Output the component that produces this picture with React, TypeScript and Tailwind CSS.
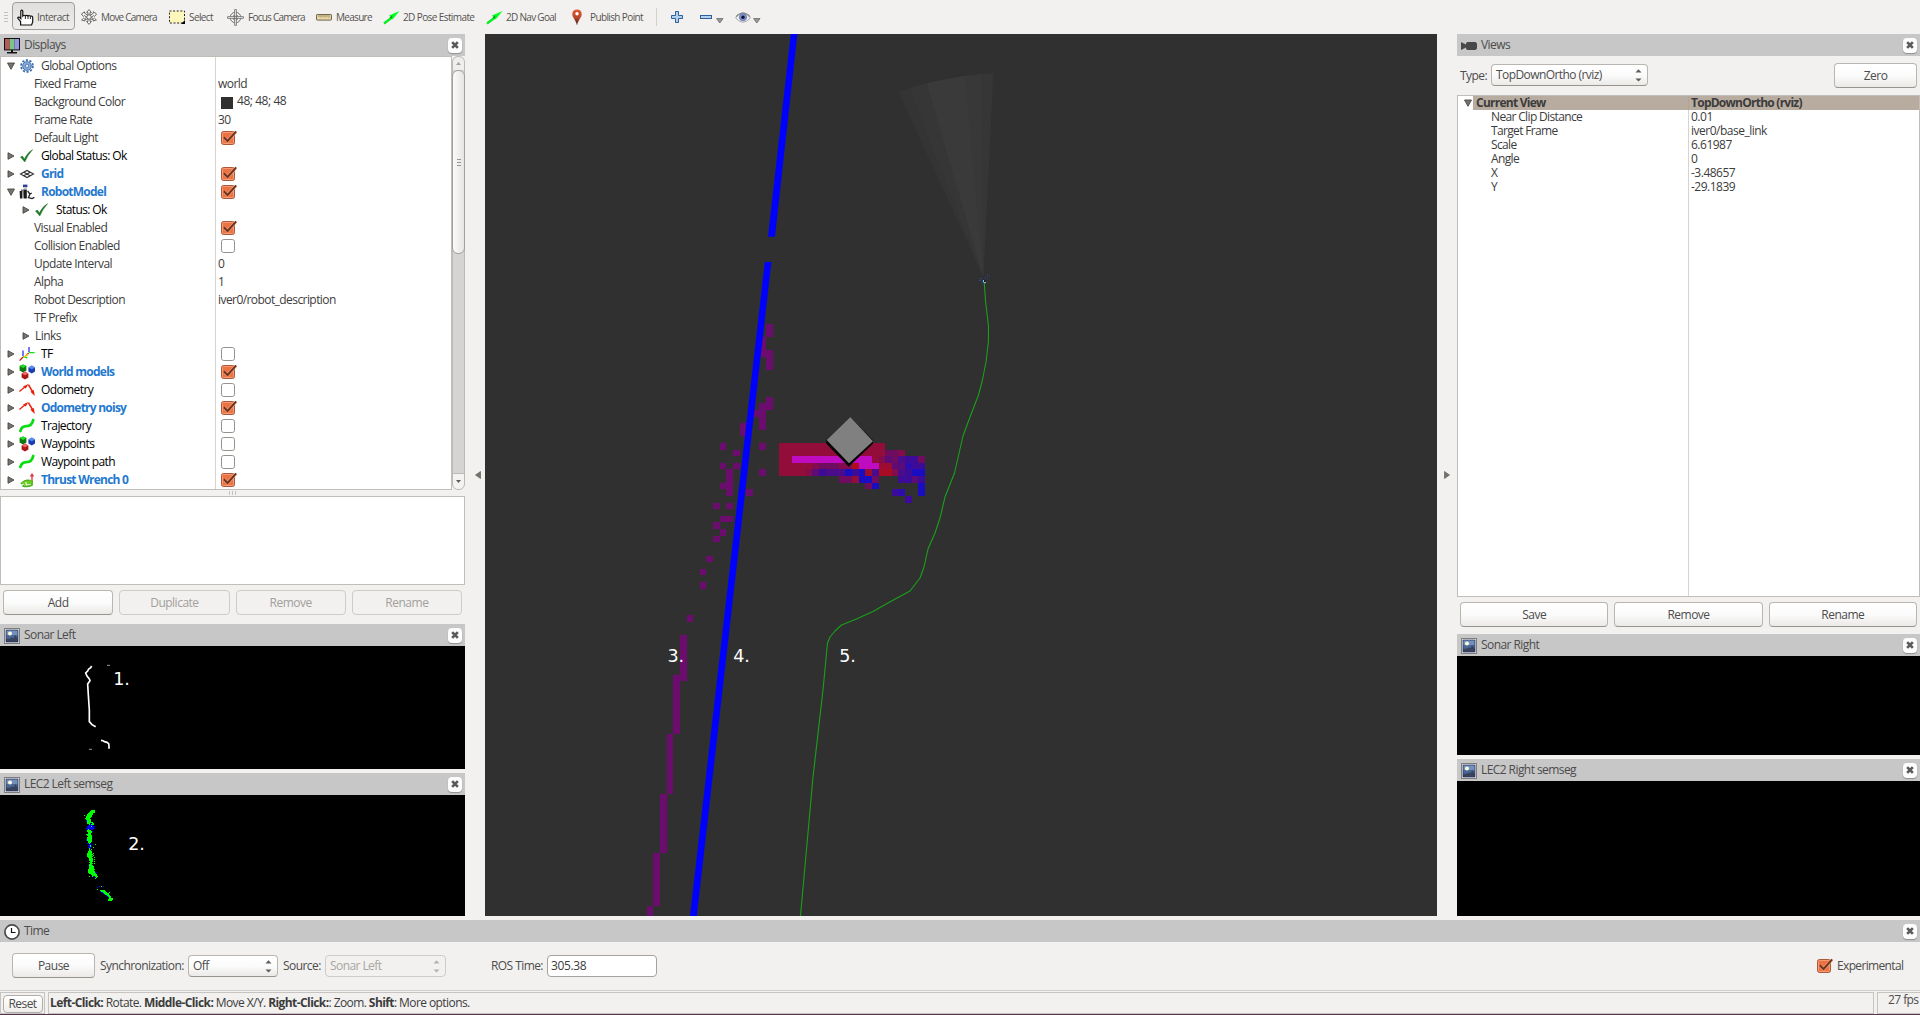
import React from "react";
import type { ReactNode } from "react";

/* ---------- small building blocks ---------- */

function Check({ on }: { on: boolean }) {
  return (
    <svg width="16" height="16" viewBox="0 0 16 16">
      {on ? (
        <>
          <rect x="0.5" y="1.5" width="13" height="13" rx="2" fill="#ec7242" stroke="#a9583a" />
          <rect x="1.5" y="2.5" width="11" height="11" rx="1" fill="none" stroke="#f59a74" />
          <path d="M3 7.6 L6.6 11 L15 1.8" fill="none" stroke="#fbb795" strokeWidth="3.4" opacity=".6" />
          <path d="M2.8 7.2 L6.6 11 L15.2 1.4" fill="none" stroke="#6e3420" strokeWidth="2" />
        </>
      ) : (
        <rect x="0.5" y="1.5" width="13" height="13" rx="2.2" fill="#fff" stroke="#96928c" />
      )}
    </svg>
  );
}

function Arrow({ open }: { open?: boolean }) {
  return (
    <svg width="8" height="8" viewBox="0 0 8 8">
      <path
        d={open ? "M0.5 1 H7.5 L4 7.3 Z" : "M1 0.7 V7.3 L7 4 Z"}
        fill="#77736f"
        stroke="#4a4744"
        strokeWidth="0.9"
      />
    </svg>
  );
}

function CloseButton() {
  return (
    <span className="flex h-[15px] w-[14px] items-center justify-center rounded-[4px] bg-[#fdfdfd] shadow-[0_1px_1px_#8f8f8f]">
      <svg width="8" height="8" viewBox="0 0 9 9">
        <path d="M1.3 1.3 L7.7 7.7 M7.7 1.3 L1.3 7.7" stroke="#5a5a5a" strokeWidth="3" />
      </svg>
    </span>
  );
}

const pictureIcon = (
  <svg width="16" height="16" viewBox="0 0 16 16">
    <rect x="0.5" y="0.5" width="15" height="15" fill="#fff" stroke="#7d7d7d" />
    <rect x="2" y="2" width="12" height="12" fill="#4b6896" />
    <rect x="2" y="2" width="12" height="5" fill="#7390bd" />
    <circle cx="6" cy="5.4" r="2" fill="#fbfbe0" />
    <path d="M2 11 L6 10.5 L8 9.5 L10 10 L11 7 L12.5 9 L14 11 V14 H2 Z" fill="#39435e" />
    <rect x="2" y="2" width="12" height="12" fill="none" stroke="#28365c" strokeWidth="0.8" />
  </svg>
);

const monitorIcon = (
  <svg width="16" height="16" viewBox="0 0 16 16">
    <rect width="16" height="12.4" fill="#111" />
    <rect x="1" y="1" width="4.8" height="10.4" fill="#b35a5a" />
    <rect x="5.8" y="1" width="4.6" height="10.4" fill="#7cc482" />
    <rect x="10.4" y="1" width="4.6" height="10.4" fill="#9594de" />
    <path d="M7 12 H9 V14 H13 V15.4 H3 V14 H7 Z" fill="#151515" />
  </svg>
);

const cameraIcon = (
  <svg width="16" height="16" viewBox="0 0 16 16">
    <path d="M0 4 V12 L5 9.4 V11 L6.5 12 H14.5 L16 10.5 V5.5 L14.5 4 H6.5 L5 5 V6.6 Z" fill="#484848" />
  </svg>
);

const clockIcon = (
  <svg width="16" height="16" viewBox="0 0 16 16">
    <circle cx="8" cy="8" r="7.1" fill="#fff" stroke="#4a4a4a" strokeWidth="1.7" />
    <path d="M7.5 4 V8.5 H11.5" fill="none" stroke="#111" strokeWidth="1.2" />
  </svg>
);

function PanelHeader({ icon, title }: { icon: ReactNode; title: string }) {
  return (
    <div className="flex h-[22px] shrink-0 items-center bg-[#c7c7c7] pr-[3px] pl-1">
      <span className="mt-px">{icon}</span>
      <span className="ml-1 flex-1 text-[#4c4c4c]">{title}</span>
      <CloseButton />
    </div>
  );
}

function Button({ label, cls, disabled }: { label: string; cls: string; disabled?: boolean }) {
  return (
    <button
      className={
        "flex h-[25px] items-center justify-center rounded-[4px] border text-[12px] tracking-[-0.5px] " +
        (disabled
          ? "border-[#cfccc8] bg-[#f2f1ef] text-[#a2a09d] "
          : "border-[#b9b6b1] border-b-[#98958f] bg-linear-to-b from-white via-[#fbfbfb] to-[#ebeae8] text-[#4c4c4c] ") +
        cls
      }
    >
      {label}
    </button>
  );
}

function Combo({ label, cls, disabled }: { label: string; cls: string; disabled?: boolean }) {
  return (
    <div
      className={
        "flex h-[22px] items-center justify-between rounded-[4px] border pr-[5px] pl-1 " +
        (disabled
          ? "border-[#cfccc8] bg-[#f2f1ef] text-[#a8a6a3] "
          : "border-[#b9b6b1] border-b-[#98958f] bg-linear-to-b from-white via-[#fbfbfb] to-[#ebeae8] text-[#4c4c4c] ") +
        cls
      }
    >
      <span>{label}</span>
      <svg width="7" height="14" viewBox="0 0 7 14" fill={disabled ? "#b4b2af" : "#5c5c5c"}>
        <path d="M0.5 4.5 H6.5 L3.5 1.3 Z M0.5 10.5 H6.5 L3.5 13.5 Z" />
      </svg>
    </div>
  );
}

/* ---------- toolbar ---------- */

const greenArrow = (
  <svg width="17" height="15" viewBox="0 0 17 15">
    <path d="M1 13.5 L9 7.5" stroke="#00f01e" strokeWidth="2.2" />
    <path d="M6 5.6 L16.5 1 L9.6 9.4 Z" fill="#00ff22" />
    <path d="M6.5 7.6 L9.6 5.4 L8.6 8.6 Z" fill="#0a8f1a" />
  </svg>
);

function ToolLabel({ children, cls }: { children: ReactNode; cls: string }) {
  return <span className={"shrink-0 whitespace-nowrap text-[10px] text-[#56534f] " + cls}>{children}</span>;
}

function Toolbar() {
  return (
    <div className="flex h-[34px] shrink-0 items-center">
      <div className="ml-1 flex h-2.5 w-1 flex-col justify-between">
        <i className="h-px bg-[#c4c2be]" />
        <i className="h-px bg-[#c4c2be]" />
        <i className="h-px bg-[#c4c2be]" />
        <i className="h-px bg-[#c4c2be]" />
      </div>
      <div className="-mt-0.5 ml-1 flex h-[28px] w-[63px] items-center rounded-[4px] border border-[#a19e99] bg-linear-to-b from-[#e0dfdd] to-[#eeedeb]">
        <svg className="mt-0.5 ml-1" width="17" height="17" viewBox="0 0 17 17">
          <path
            d="M3.6 16 V12.5 L0.8 9.3 Q0.6 7.6 2.4 8.2 L3.8 9.5 V2 Q4.7 0.3 5.8 2 V7 Q7 5.6 8.4 6.9 Q9.8 5.7 11 7 Q12.2 6 13.4 7.2 Q15.6 6.6 15.7 8.4 V13 L14.6 16 Z"
            fill="#fff"
            stroke="#111"
            strokeWidth="1.2"
          />
          <path d="M8.4 7 V10 M11 7.2 V10 M13.4 7.5 V10" stroke="#111" strokeWidth="0.9" />
        </svg>
        <ToolLabel cls="mt-0.5 ml-[3px] tracking-[-0.5px]">Interact</ToolLabel>
      </div>
      <svg className="ml-[6px] shrink-0" width="16" height="16" viewBox="0 0 16 16" fill="#f6f6f5" stroke="#5b5b5b" strokeWidth="0.9">
        <path d="M8 0.6 L10.4 3.4 H9 V6.4 L12.4 4.2 V2.8 L15.6 5 L13.6 7.4 L12.6 6.6 L10.4 8.2 L12.4 10 L13.4 9.2 L15.4 11 L12.2 12 V10.8 L9 9.6 V12.4 H10.4 L8 15.4 L5.6 12.4 H7 V9.6 L3.8 10.8 V12 L0.6 11 L2.6 9.2 L3.6 10 L5.6 8.2 L3.4 6.6 L2.4 7.4 L0.4 5 L3.6 2.8 V4.2 L7 6.4 V3.4 H5.6 Z" />
        <circle cx="8" cy="8" r="2.2" />
      </svg>
      <ToolLabel cls="ml-1 w-[55px] tracking-[-0.8px]">Move Camera</ToolLabel>
      <svg className="ml-[13px] shrink-0" width="16" height="14" viewBox="0 0 16 14">
        <rect x="0.5" y="1" width="15" height="12" fill="#fdf6bd" stroke="#26231c" strokeDasharray="2 1.6" />
        <path d="M12 14 H16 V10 Z" fill="#000" />
      </svg>
      <ToolLabel cls="ml-1 w-[25px] tracking-[-0.6px]">Select</ToolLabel>
      <svg className="ml-[13px] shrink-0" width="17" height="17" viewBox="0 0 17 17" fill="none" stroke="#6a6a6a">
        <circle cx="8.5" cy="8.5" r="5.3" />
        <circle cx="8.5" cy="8.5" r="2.6" />
        <path d="M7.6 0.6 H9.4 V16.4 H7.6 Z M0.6 7.6 H16.4 V9.4 H0.6 Z" fill="#eee" strokeWidth="0.8" />
      </svg>
      <ToolLabel cls="ml-1 w-[56px] tracking-[-0.75px]">Focus Camera</ToolLabel>
      <svg className="ml-3 shrink-0" width="16" height="7" viewBox="0 0 16 7">
        <rect x="0.5" y="0.5" width="15" height="5.6" rx="0.6" fill="#e8d6a4" stroke="#6f6753" />
        <path d="M3 1 V3 M5 1 V3.6 M7 1 V3 M9 1 V3.6 M11 1 V3 M13 1 V3.6" stroke="#8a7d5d" strokeWidth="0.8" />
      </svg>
      <ToolLabel cls="ml-1 w-[35px] tracking-[-0.7px]">Measure</ToolLabel>
      <span className="ml-3 shrink-0">{greenArrow}</span>
      <ToolLabel cls="ml-[3px] w-[71px] tracking-[-0.6px]">2D Pose Estimate</ToolLabel>
      <span className="ml-3 shrink-0">{greenArrow}</span>
      <ToolLabel cls="ml-[3px] w-[50px] tracking-[-0.7px]">2D Nav Goal</ToolLabel>
      <svg className="ml-4 shrink-0" width="10" height="17" viewBox="0 0 10 17">
        <defs>
          <linearGradient id="pin" x1="0" y1="0" x2="0" y2="1">
            <stop offset="0" stopColor="#df5a35" />
            <stop offset="0.5" stopColor="#b8472b" />
            <stop offset="1" stopColor="#3c1c10" />
          </linearGradient>
        </defs>
        <path d="M5 0.5 C2 0.5 0.3 2.6 0.3 5.2 C0.3 8.6 4 11 5 16.4 C6 11 9.7 8.6 9.7 5.2 C9.7 2.6 8 0.5 5 0.5 Z" fill="url(#pin)" />
        <circle cx="5" cy="4.8" r="1.7" fill="#fff" />
      </svg>
      <ToolLabel cls="ml-2 w-[53px] tracking-[-0.62px]">Publish Point</ToolLabel>
      <i className="ml-[13px] h-[18px] w-px bg-[#d3d1ce]" />
      <svg className="ml-[14px] shrink-0" width="12" height="12" viewBox="0 0 12 12">
        <path d="M4.5 0.5 H7.5 V4.5 H11.5 V7.5 H7.5 V11.5 H4.5 V7.5 H0.5 V4.5 H4.5 Z" fill="#b4d1ec" stroke="#2b5f9e" />
      </svg>
      <svg className="ml-[17px] shrink-0" width="12" height="4" viewBox="0 0 12 4">
        <rect x="0.5" y="0.5" width="11" height="3" fill="#b4d1ec" stroke="#2b5f9e" />
      </svg>
      <svg className="mt-[7px] ml-1 shrink-0" width="8" height="6" viewBox="0 0 8 6">
        <path d="M0.6 0.6 H7 L3.8 5 Z" fill="#999" stroke="#666" strokeWidth="0.8" />
      </svg>
      <svg className="ml-[11px] shrink-0" width="16" height="11" viewBox="0 0 16 11">
        <path d="M0.5 6 Q8 -4.5 15.5 6 Q8 14.5 0.5 6 Z" fill="#eef0f0" stroke="#aaa" />
        <path d="M1 4.6 Q8 -2.6 15 4.6" fill="none" stroke="#86847f" strokeWidth="1.1" />
        <circle cx="8" cy="5.2" r="3.6" fill="#7f94cc" stroke="#5c6fa8" strokeWidth="0.7" />
        <circle cx="8" cy="5.2" r="1.7" fill="#101430" />
      </svg>
      <svg className="mt-[7px] ml-[2px] shrink-0" width="8" height="6" viewBox="0 0 8 6">
        <path d="M0.6 0.6 H7 L3.8 5 Z" fill="#999" stroke="#666" strokeWidth="0.8" />
      </svg>
    </div>
  );
}

/* ---------- displays tree ---------- */

const icons: Record<string, ReactNode> = {
  gear: (
    <>
      <circle cx="8" cy="8" r="5.9" fill="none" stroke="#3d6cae" strokeWidth="1.8" strokeDasharray="2.2 1.5" />
      <circle cx="8" cy="8" r="4.3" fill="#8fb2df" stroke="#3d6cae" />
      <circle cx="8" cy="8" r="1.9" fill="#dbe8f7" stroke="#3d6cae" strokeWidth="0.9" />
    </>
  ),
  ok: <path d="M1.5 9 L3.4 8 L5.4 11 Q8.4 4.6 13.6 1.6 Q8.6 7.4 5.8 14 Z" fill="#23762a" stroke="#23762a" strokeWidth="0.5" />,
  grid: (
    <g fill="none" stroke="#333" strokeWidth="1.1">
      <path d="M1.5 8 L8 4.4 L14.5 8 L8 11.6 Z M4.8 6.2 L11.2 9.8 M11.2 6.2 L4.8 9.8" />
    </g>
  ),
  robot: (
    <>
      <rect x="4" y="0.6" width="4.4" height="2.6" fill="#2a3f9a" />
      <rect x="4.6" y="3" width="3.4" height="2" fill="#c9c9c9" />
      <path d="M0.6 7 H3.4 V14.6 H1 Z M4.2 5.4 H7.8 V14.6 H4.6 Z" fill="#1b1b1b" />
      <path d="M8.6 7 L11 10 L9.4 13.6 L13 14.6 L15.4 13.4 M11 10 L12.8 9" fill="none" stroke="#222" strokeWidth="1.3" />
      <path d="M2 6 L5 6.8" stroke="#777" strokeWidth="1.4" />
    </>
  ),
  tf: (
    <g fill="none" strokeWidth="1.3">
      <path d="M4 10 V4.6 M10 6 V1" stroke="#2b32ee" />
      <path d="M10 6.6 H15.6 M4 10.6 L8.4 11.8" stroke="#12e012" />
      <path d="M4 11 L0.6 14.6 M9.6 7 L6.8 10" stroke="#dd1111" />
      <path d="M9 8 L5 11" stroke="#e6d200" />
    </g>
  ),
  markers: (
    <>
      <path d="M0.6 2 L4 0.4 L7.4 2 V6.4 L4 8.4 L0.6 6.4 Z" fill="#0b7a10" />
      <path d="M0.6 2 L4 0.4 L7.4 2 L4 4 Z" fill="#1fe022" />
      <path d="M9.4 3.4 L12.8 1.6 L16 3.4 V7.4 L12.8 9.4 L9.4 7.4 Z" fill="#1a3cb4" />
      <path d="M9.4 3.4 L12.8 1.6 L16 3.4 L12.8 5.2 Z" fill="#5f8cf0" />
      <path d="M2.6 9.4 L6 7.6 L9.4 9.4 V13.4 L6 15.6 L2.6 13.4 Z" fill="#a81818" />
      <path d="M2.6 9.4 L6 7.6 L9.4 9.4 L6 11.2 Z" fill="#ee6a6a" />
    </>
  ),
  odom: (
    <>
      <path d="M0.4 9.4 L7 4" stroke="#e8210c" strokeWidth="1.3" />
      <path d="M4 4.6 L9.4 2 L6.8 6.6 Z" fill="#e8210c" />
      <path d="M9.4 2.6 L14.6 11.4" stroke="#e8210c" strokeWidth="1.6" />
      <path d="M11.4 9.8 L14.8 8 L15.8 14 Z" fill="#e8210c" />
    </>
  ),
  path: <path d="M1.4 13 Q2.4 8.4 7.4 8.2 Q13 8 14.2 2" fill="none" stroke="#0bdc14" strokeWidth="2.8" strokeLinecap="round" />,
  wrench: (
    <>
      <path d="M13 10 V3" stroke="#e03030" strokeWidth="1.3" />
      <path d="M10.8 4.4 L13 1 L15.2 4.4 Z" fill="#e03030" />
      <path d="M2 12 Q7 6.4 13 9.4 V13 Q8 15.6 3.4 13.6" fill="none" stroke="#4fae1c" strokeWidth="1.8" />
      <path d="M1.4 10.8 L6 9.4 L7 13.6 Z M7 9.4 L12.6 8 V12 L8 12.6 Z" fill="#67cf1e" />
    </>
  ),
};

type Row = {
  label: string;
  kind?: "prop" | "top" | "on";
  icon?: string;
  arrow?: "open" | "shut";
  nested?: boolean;
  value?: string;
  check?: boolean;
  swatch?: boolean;
};

const rows: Row[] = [
  { label: "Global Options", icon: "gear", arrow: "open" },
  { label: "Fixed Frame", value: "world" },
  { label: "Background Color", value: "48; 48; 48", swatch: true },
  { label: "Frame Rate", value: "30" },
  { label: "Default Light", check: true },
  { label: "Global Status: Ok", kind: "top", icon: "ok", arrow: "shut" },
  { label: "Grid", kind: "on", icon: "grid", arrow: "shut", check: true },
  { label: "RobotModel", kind: "on", icon: "robot", arrow: "open", check: true },
  { label: "Status: Ok", kind: "top", icon: "ok", arrow: "shut", nested: true },
  { label: "Visual Enabled", check: true },
  { label: "Collision Enabled", check: false },
  { label: "Update Interval", value: "0" },
  { label: "Alpha", value: "1" },
  { label: "Robot Description", value: "iver0/robot_description" },
  { label: "TF Prefix" },
  { label: "Links", arrow: "shut", nested: true },
  { label: "TF", kind: "top", icon: "tf", arrow: "shut", check: false },
  { label: "World models", kind: "on", icon: "markers", arrow: "shut", check: true },
  { label: "Odometry", kind: "top", icon: "odom", arrow: "shut", check: false },
  { label: "Odometry noisy", kind: "on", icon: "odom", arrow: "shut", check: true },
  { label: "Trajectory", kind: "top", icon: "path", arrow: "shut", check: false },
  { label: "Waypoints", kind: "top", icon: "markers", arrow: "shut", check: false },
  { label: "Waypoint path", kind: "top", icon: "path", arrow: "shut", check: false },
  { label: "Thrust Wrench 0", kind: "on", icon: "wrench", arrow: "shut", check: true },
];

function TreeRow({ r }: { r: Row }) {
  const tone =
    r.kind === "on"
      ? "font-bold text-[#2479cf] tracking-[-0.76px]"
      : r.kind === "top"
        ? "text-black tracking-[-0.6px]"
        : "text-[#3c3c3c]";
  return (
    <div className="flex h-[18px] items-center">
      <div className="flex h-full w-[215px] items-center border-r border-[#d6d4d1]">
        <span className={r.nested ? "w-[21px]" : "w-[6px]"} />
        <span className={r.nested && !r.icon ? "w-[13px]" : "w-3"}>{r.arrow && <Arrow open={r.arrow === "open"} />}</span>
        {r.icon ? (
          <svg className="mr-[6px]" width="16" height="16" viewBox="0 0 16 16">
            {icons[r.icon]}
          </svg>
        ) : (
          <span className={r.nested ? "w-0" : "w-[15px]"} />
        )}
        <span className={"whitespace-nowrap " + tone}>{r.label}</span>
      </div>
      {r.check !== undefined && (
        <span className="ml-[5px]">
          <Check on={r.check} />
        </span>
      )}
      {r.swatch && <i className="mt-0.5 ml-[5px] size-3 bg-[#303030]" />}
      {r.value && <span className={r.swatch ? "-mt-[3px] ml-1 tracking-[-0.45px] text-[#3c3c3c]" : "ml-[2px] text-[#3c3c3c]"}>{r.value}</span>}
    </div>
  );
}

function Scrollbar() {
  return (
    <div className="flex w-[13px] flex-col rounded-[6px] border border-[#bdbab6] bg-[#d6d4d2]">
      <div className="flex h-[13px] shrink-0 items-center justify-center rounded-t-[6px] bg-[#efeeed]">
        <svg width="5" height="3" viewBox="0 0 5 3">
          <path d="M0 3 H5 L2.5 0 Z" fill="#a5a29e" />
        </svg>
      </div>
      <div className="-mx-px flex h-[184px] shrink-0 flex-col items-center justify-center gap-[2px] rounded-[6px] border border-[#a3a09b] bg-linear-to-r from-[#fafafa] to-[#e6e5e3]">
        <i className="h-px w-1 bg-[#98958f]" />
        <i className="h-px w-1 bg-[#98958f]" />
        <i className="h-px w-1 bg-[#98958f]" />
      </div>
      <div className="flex-1" />
      <div className="flex h-[16px] shrink-0 items-center justify-center rounded-b-[6px] border-t border-[#bdbab6] bg-[#f4f3f2]">
        <svg width="5" height="3" viewBox="0 0 5 3">
          <path d="M0 0 H5 L2.5 3 Z" fill="#5d5a56" />
        </svg>
      </div>
    </div>
  );
}

/* ---------- sonar images ---------- */

// Runs of the segmented sonar return: start x, y, then one letter per pixel (g = green, b = blue)
const SEG: [number, number, string][] = [
  [272, 150, "gggg"], [269, 153, "ggggg"], [266, 156, "gggggg"], [263, 159, "ggggg"], [260, 162, "gggggg"],
  [251, 165, "g..ggggg"], [257, 168, "gggggg"], [257, 171, "ggggg"], [254, 174, "ggggg"], [257, 177, "ggggg"],
  [257, 180, "bgggg"], [257, 183, "bgggg"], [260, 186, "gggggg"], [260, 189, "gggb.gg"], [266, 192, "gbggg"],
  [263, 195, "bbbbb"], [260, 198, "bbbbgbbb"], [260, 201, "bbbbbbb"], [257, 204, "bbbbbbbbb"], [260, 207, "bgb.bb"],
  [260, 210, "gggg"], [260, 213, "gggggb"], [263, 216, "gggg"], [263, 219, "ggg"], [257, 222, "ggggg"],
  [260, 225, "ggggg"], [263, 228, "gggg"], [260, 231, "ggggg"], [260, 234, "ggggg"], [257, 237, "bggggg"],
  [257, 240, "bggggg"], [263, 243, "gggg"], [263, 246, "ggg"], [260, 249, "bbgb"], [266, 252, "bb..b.g"],
  [263, 255, "bbgb"], [266, 258, "bgb"], [263, 261, "bbb..g"], [266, 264, "gb"], [266, 267, "g.g"],
  [266, 270, "gg"], [263, 273, "gggg"], [263, 276, "gggg"], [260, 279, "ggggg.g"], [260, 282, "gggggg"],
  [260, 285, "ggggg.g"], [260, 288, "gggggg"], [263, 291, "gggg..g"], [266, 294, "gggg"], [266, 297, "gggg.g"],
  [266, 300, "gggg"], [269, 303, "ggg.g"], [266, 306, "ggg"], [269, 309, "ggg.g"], [266, 312, "ggg"],
  [263, 315, "bgggg"], [266, 318, "ggggg"], [266, 321, "ggggg"], [266, 324, "ggggg"], [263, 327, "ggggggg"],
  [263, 330, "gggggg"], [263, 333, "ggggggg"], [263, 336, "gggggggbb"], [266, 339, "ggggggg"], [272, 342, "gggggg"],
  [275, 345, "ggggg"], [266, 348, "g..gb.ggg"], [284, 351, "bg"], [284, 354, "g"],
  [296, 378, "b.g.b"], [290, 381, "b...."], [290, 387, "g"], [299, 390, "ggggg"], [299, 393, "bggggg"],
  [302, 396, "bbgggg..g"], [308, 399, "bggggg"], [311, 402, "bgggg"], [317, 405, "bggg"], [320, 408, "bggg"],
  [323, 411, "bgg"], [326, 414, "gggg"], [323, 417, "ggggg"], [323, 420, "gggg"],
];

function SonarLeft() {
  return (
    <svg className="block h-[123px] w-[465px] shrink-0 bg-black tracking-normal" viewBox="0 646 465 123">
      <g transform="translate(0 480) scale(.33333)" fill="none" stroke="#fff" strokeWidth="5">
        <path d="M275 558 L272 563 L266 567 L263 573 L257 579 L261 588 L268 597 L270 602 L263 612 L265 645 L268 690 L268 725 L276 734 L287 740" />
        <path d="M303 781 L309 782 L313 785 L321 787 L326 791 L327 798 V806" />
        <path d="M321 556 H330 M267 808 H276" stroke="#999" strokeWidth="3" />
      </g>
      <text x="113.2" y="684.7" fill="#fff" fontSize="17.5" fontFamily="DejaVu Sans">1.</text>
    </svg>
  );
}

function SemsegLeft() {
  return (
    <svg className="block h-[121px] w-[465px] shrink-0 bg-black tracking-normal" viewBox="0 795 465 121">
      <g transform="translate(.33333 760) scale(.33333)" shapeRendering="crispEdges">
        {SEG.map(([x, y, run]) =>
          run.split("").map((c, i) =>
            c === "." ? null : (
              <rect key={y + "-" + i} x={x + i * 3} y={y} width="3" height="3" fill={c === "g" ? "#00ff00" : "#0000ff"} />
            )
          )
        )}
      </g>
      <text x="128.2" y="850" fill="#fff" fontSize="17.5" fontFamily="DejaVu Sans">2.</text>
    </svg>
  );
}

/* ---------- 3D viewport ---------- */

const purple: number[][] = [
  [377, 71, 22, 40], [357, 110, 20, 60], [377, 150, 22, 59], [338, 189, 19, 42], [377, 290, 22, 39], [358, 309, 20, 80],
  [339, 330, 19, 20], [300, 370, 20, 37], [240, 430, 18, 20], [279, 449, 20, 18], [358, 430, 20, 20], [240, 490, 18, 18],
  [279, 490, 20, 18], [258, 507, 21, 80], [240, 550, 18, 17], [358, 507, 20, 20], [318, 567, 22, 20], [219, 610, 20, 17],
  [258, 610, 21, 17], [240, 648, 40, 17], [219, 667, 20, 20], [240, 687, 18, 20], [219, 707, 20, 18], [198, 767, 21, 19],
  [179, 807, 18, 19], [179, 846, 18, 21], [141, 945, 18, 21], [120, 1005, 21, 138], [99, 1125, 21, 177], [81, 1302, 18, 179],
  [60, 1481, 21, 178], [39, 1658, 21, 159], [21, 1817, 18, 33],
];

// Occupancy cells: x, y, right, bottom, colour
const cells: [number, number, number, number, string][] = [
  [417, 430, 735, 527, "#920d3a"],
  [735, 449, 775, 468, "#700c60"], [775, 449, 795, 468, "#840c4c"],
  [717, 468, 735, 489, "#840c4c"], [735, 468, 755, 489, "#5c0c74"], [755, 468, 775, 489, "#700c60"],
  [775, 468, 795, 489, "#4a0c88"], [795, 468, 834, 489, "#3c0c98"], [834, 468, 855, 489, "#700c60"],
  [717, 489, 755, 507, "#9c0c30"], [755, 489, 795, 507, "#5c0c74"], [795, 489, 816, 507, "#2c0cac"],
  [816, 489, 855, 507, "#3c0c98"], [516, 489, 537, 507, "#840c4c"], [537, 489, 597, 507, "#700c60"],
  [597, 489, 636, 507, "#840c4c"], [636, 489, 657, 507, "#b00c20"],
  [498, 507, 516, 527, "#840c4c"], [516, 507, 537, 527, "#5c0c74"], [537, 507, 558, 527, "#3c0c98"],
  [558, 507, 615, 527, "#4a0c88"], [615, 507, 636, 527, "#1a0cc0"], [636, 507, 657, 527, "#3c0c98"],
  [657, 507, 675, 527, "#1a0cc0"], [675, 507, 696, 527, "#9c0c30"], [696, 507, 717, 527, "#4a0c88"],
  [717, 507, 755, 527, "#a80c24"], [755, 507, 775, 527, "#840c4c"], [775, 507, 795, 527, "#4a0c88"],
  [795, 507, 816, 527, "#3c0c98"], [816, 507, 855, 527, "#1a0cc0"],
  [597, 527, 636, 549, "#700c60"], [636, 527, 657, 549, "#920d3a"], [657, 527, 696, 549, "#1a0cc0"],
  [696, 527, 717, 549, "#700c60"], [775, 527, 816, 549, "#3c0c98"], [816, 527, 834, 549, "#5c0c74"],
  [834, 527, 855, 549, "#3c0c98"],
  [675, 549, 696, 567, "#700c60"], [696, 549, 717, 567, "#1a0cc0"], [834, 549, 855, 587, "#1a0cc0"],
  [755, 567, 775, 587, "#3c0c98"], [775, 567, 795, 587, "#2c0cac"], [795, 587, 816, 608, "#3c0c98"],
  [456, 468, 696, 489, "#c00cc0"], [657, 489, 717, 507, "#c00cc0"],
];

function Viewport() {
  return (
    <svg className="block h-[882px] w-[952px] shrink-0 bg-[#303030] tracking-normal" viewBox="485 34 952 882">
      <g transform="translate(760 30) scale(.33333)">
        <path d="M670 742 L415 185 L448 174 L500 160 L555 148 L615 138 L665 132 L700 130 Z" fill="#343434" />
        <path d="M670 742 L448 174 L500 160 L555 148 L615 138 L665 132 L700 130 Z" fill="#363636" />
        <path d="M670 742 L500 160 L555 148 L615 138 L665 132 Z" fill="#383838" />
        <path d="M670 742 L500 160 L555 148 L615 138 Z" fill="#3a3a3a" />
        <path d="M657 749 h7 v4 h-7z M660 743 h6 v3 h-6z M687 737 h3 v4 h-3z M666 755 h12 v5 h-12z M681 734 h3 v4 h-3z M681 744 h3 v4 h-3z M675 741 h3 v3 h-3z" fill="#2c4590" />
        <path d="M669 750 h3 v7 h-3z M672 756 h6 v3 h-6z" fill="#8ec8d8" />
        <path d="M672 752 h4 v4 h-4z" fill="#000" />
      </g>
      <g transform="translate(640 300) scale(.33333)" shapeRendering="crispEdges">
        {purple.map(([x, y, w, h], i) => (
          <rect key={i} x={x} y={y} width={w} height={h} fill="#6b0c6e" />
        ))}
        {cells.map(([x, y, r, b, c], i) => (
          <rect key={i} x={x} y={y} width={r - x} height={b - y} fill={c} />
        ))}
      </g>
      <g fill="#0000ff">
        <path d="M790.8 34 H797.4 L775 236.8 H768 Z" />
        <path d="M764.8 262 H771.4 L696.8 916 H690 Z" />
      </g>
      <g transform="translate(640 300) scale(.33333)">
        <path d="M559 420 L631 351 L699 421 V431 L626 500 L559 431 Z" fill="#050505" />
        <path d="M560 420 L631 351 L699 424 L627 490 Z" fill="#808080" />
      </g>
      <path
        d="M984.3 283 L985.5 301 L988.5 326 L988.4 342 L986 362 L982 382 L978.5 395 L970 417 L963 436 L960 449 L954.5 473 L945 497 L940 518 L935 533 L928 549 L924 567 L920 578 L910 591 L891.5 601 L873 611.5 L856.5 619 L841.5 625 L835 631 L830 637 L827.5 643 L823 690 L813 777 L800.5 916"
        fill="none"
        stroke="#1aa01a"
        strokeWidth="1.1"
        strokeLinejoin="round"
      />
      <g fill="#fff" fontSize="17.5" fontFamily="DejaVu Sans">
        <text x="667.4" y="662">3.</text>
        <text x="733.2" y="662">4.</text>
        <text x="839.2" y="662">5.</text>
      </g>
    </svg>
  );
}

/* ---------- views ---------- */

const views: [string, string][] = [
  ["Near Clip Distance", "0.01"],
  ["Target Frame", "iver0/base_link"],
  ["Scale", "6.61987"],
  ["Angle", "0"],
  ["X", "-3.48657"],
  ["Y", "-29.1839"],
];

function Views() {
  return (
    <div className="flex h-[563px] shrink-0 flex-col">
      <PanelHeader icon={cameraIcon} title="Views" />
      <div className="flex h-[39px] items-center px-[3px]">
        <span className="w-[31px] text-[#4c4c4c]">Type:</span>
        <Combo label="TopDownOrtho (rviz)" cls="mb-[1px] w-[157px]" />
        <span className="flex-1" />
        <Button label="Zero" cls="w-[83px]" />
      </div>
      <div className="flex flex-1 flex-col border border-[#c1beb9] bg-white text-[#3c3c3c]">
        <div className="flex h-[14px] items-center font-bold tracking-[-0.75px]">
          <span className="flex w-[15px] justify-end pr-px">
            <Arrow open />
          </span>
          <span className="flex h-full w-[216px] items-center border-r border-[#aea59b] bg-[#b8aca1] pl-[3px]">Current View</span>
          <span className="flex h-full flex-1 items-center bg-[#b8aca1] pl-[2px]">TopDownOrtho (rviz)</span>
        </div>
        {views.map(([k, v]) => (
          <div key={k} className="flex h-[14px] items-center">
            <span className="flex h-full w-[231px] items-center border-r border-[#d6d4d1] pl-[33px] tracking-[-0.65px]">{k}</span>
            <span className="pl-[2px] tracking-[-0.5px]">{v}</span>
          </div>
        ))}
        <div className="w-[231px] flex-1 border-r border-[#d6d4d1]" />
      </div>
    </div>
  );
}

export default function App() {
  return (
    <div className="flex h-[1015px] w-[1920px] flex-col overflow-hidden bg-[#f2f1f0] font-['Open_Sans',sans-serif] text-[12px] leading-[14px] tracking-[-0.57px]">
      <Toolbar />
      <div className="flex h-[882px] shrink-0">
        <div className="flex w-[465px] shrink-0 flex-col">
          <PanelHeader icon={monitorIcon} title="Displays" />
          <div className="flex h-[434px] shrink-0">
            <div className="w-[452px] border border-[#c1beb9] bg-white">
              {rows.map((r, i) => (
                <TreeRow key={i} r={r} />
              ))}
            </div>
            <Scrollbar />
          </div>
          <div className="flex h-[6px] shrink-0 items-center justify-center gap-[2px]">
            <i className="h-1 w-px bg-[#c4c2be]" />
            <i className="h-1 w-px bg-[#c4c2be]" />
            <i className="h-1 w-px bg-[#c4c2be]" />
          </div>
          <div className="h-[89px] shrink-0 border border-[#c1beb9] bg-white" />
          <div className="flex h-[39px] shrink-0 gap-[6px] px-[3px] pt-[5px]">
            <Button label="Add" cls="flex-1" />
            <Button label="Duplicate" cls="flex-1" disabled />
            <Button label="Remove" cls="flex-1" disabled />
            <Button label="Rename" cls="flex-1" disabled />
          </div>
          <PanelHeader icon={pictureIcon} title="Sonar Left" />
          <SonarLeft />
          <div className="h-1 shrink-0" />
          <PanelHeader icon={pictureIcon} title="LEC2 Left semseg" />
          <SemsegLeft />
        </div>
        <div className="flex w-5 shrink-0 items-center justify-end pr-1">
          <svg width="6" height="8" viewBox="0 0 6 8">
            <path d="M5.5 0.5 V7.5 L0.5 4 Z" fill="#77736f" stroke="#55524e" strokeWidth="0.6" />
          </svg>
        </div>
        <Viewport />
        <div className="flex w-5 shrink-0 items-center justify-center">
          <svg width="6" height="8" viewBox="0 0 6 8">
            <path d="M0.5 0.5 V7.5 L5.5 4 Z" fill="#77736f" stroke="#55524e" strokeWidth="0.6" />
          </svg>
        </div>
        <div className="flex w-[463px] shrink-0 flex-col">
          <Views />
          <div className="flex h-[37px] shrink-0 gap-[6px] px-[3px] pt-[5px]">
            <Button label="Save" cls="flex-1" />
            <Button label="Remove" cls="flex-1" />
            <Button label="Rename" cls="flex-1" />
          </div>
          <PanelHeader icon={pictureIcon} title="Sonar Right" />
          <div className="h-[99px] shrink-0 bg-black" />
          <div className="h-1 shrink-0" />
          <PanelHeader icon={pictureIcon} title="LEC2 Right semseg" />
          <div className="flex-1 bg-black" />
        </div>
      </div>
      <div className="h-1 shrink-0" />
      <PanelHeader icon={clockIcon} title="Time" />
      <div className="flex h-[48px] shrink-0 items-center pb-px pl-3 text-[#4c4c4c]">
        <Button label="Pause" cls="w-[83px]" />
        <span className="ml-[5px] w-[88px]">Synchronization:</span>
        <Combo label="Off" cls="w-[90px]" />
        <span className="ml-[5px] w-[42px]">Source:</span>
        <Combo label="Sonar Left" cls="w-[121px]" disabled />
        <span className="ml-[45px] w-[56px]">ROS Time:</span>
        <span className="flex h-[22px] w-[110px] items-center rounded-[4px] border border-[#a5a29d] bg-white pl-[3px] text-[#3c3c3c] tracking-[-0.35px]">305.38</span>
        <span className="flex-1" />
        <Check on />
        <span className="mr-[16px] ml-1 w-[67px] tracking-[-0.65px]">Experimental</span>
      </div>
      <div className="flex h-[24px] shrink-0 gap-[3px] border-t border-[#cfcdca] pt-px text-[#4c4c4c]">
        <div className="flex h-[22px] w-[45px] items-center justify-center border border-[#c6c4c0]">
          <span className="mt-px flex h-[18px] w-10 items-center justify-center rounded-[4px] border border-[#b0ada8] bg-linear-to-b from-white to-[#efeeec]">Reset</span>
        </div>
        <div className="flex h-[22px] w-[1826px] items-center border border-[#c6c4c0] pl-px">
          <span className="whitespace-pre text-[#3c3c3c] tracking-[-0.58px]">
            <b>Left-Click:</b> Rotate. <b>Middle-Click:</b> Move X/Y. <b>Right-Click:</b>: Zoom. <b>Shift</b>: More options.
          </span>
        </div>
        <div className="h-[22px] flex-1 overflow-hidden border border-r-0 border-[#c6c4c0] pl-[10px] whitespace-nowrap">27 fps</div>
      </div>
      <div className="h-px shrink-0 bg-[#5a3348]" />
    </div>
  );
}
